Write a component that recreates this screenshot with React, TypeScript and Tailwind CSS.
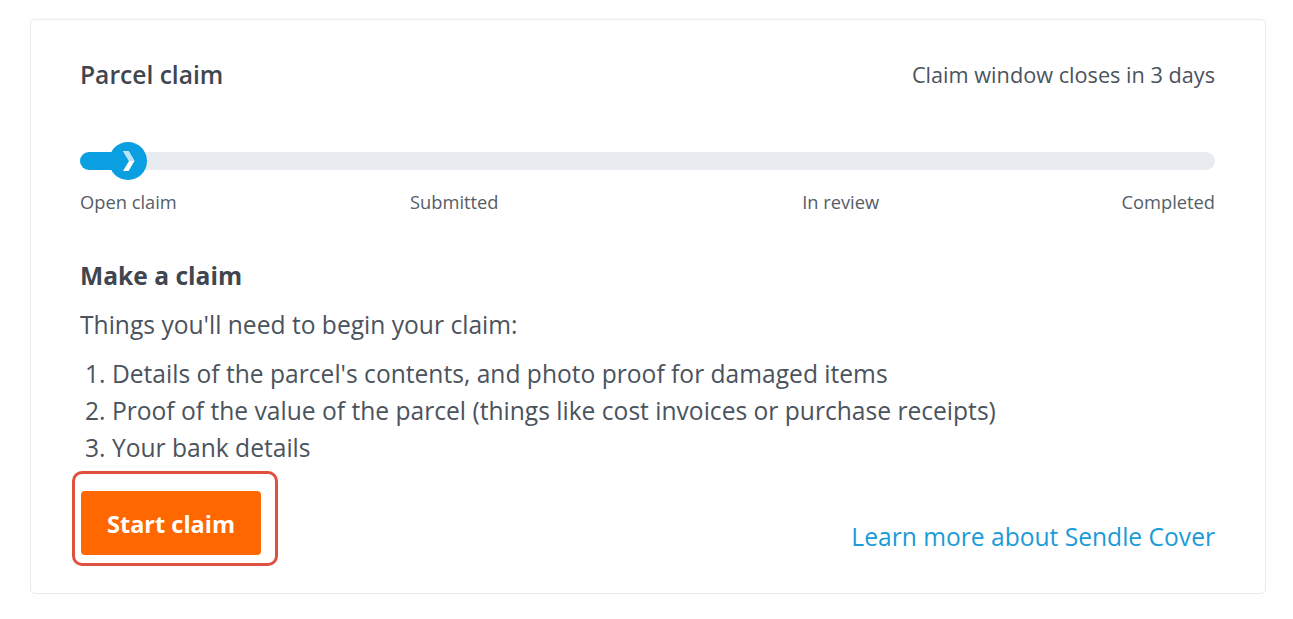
import React from 'react';

const steps = ['Open claim', 'Submitted', 'In review', 'Completed'];

const needs = [
    "Details of the parcel's contents, and photo proof for damaged items",
    'Proof of the value of the parcel (things like cost invoices or purchase receipts)',
    'Your bank details',
];

const App = () => {
    return (
        <div className="min-h-[619px] bg-white pt-[19px] px-[30px] font-['Open_Sans',sans-serif]">
            <div className="w-[1236px] rounded-[5px] border border-[#eaecef] bg-white pl-[49px] pr-[50px] pt-[41px] pb-[27px] shadow-[0_0_2px_rgba(0,0,0,0.04)]">
                <div className="flex items-center justify-between">
                    <h2 className="text-[24.6px] leading-[28px] font-semibold text-[#3f4650]">Parcel claim</h2>
                    <span className="text-[21.7px] leading-[28px] text-[#4b535d]">Claim window closes in 3 days</span>
                </div>

                <div className="mt-[53px] flex h-[38px] items-center">
                    <div className="relative h-[18px] w-full rounded-full bg-[#e8ebef]">
                        <div className="h-full w-[48px] rounded-l-full bg-[#0a9fe0]" />
                        <div className="absolute left-[29px] top-[-10px] flex h-[38px] w-[38px] items-center justify-center rounded-full bg-[#0a9fe0]">
                            <svg width="13" height="20" viewBox="0 0 13 20" className="ml-[1px]">
                                <path d="M1 0 H6.5 L12.5 10 L6.5 20 H1 L7 10 Z" fill="#ffffff" />
                                <path d="M1 0 H6.5 L12.5 10 H7 Z" fill="#b9e4f8" />
                            </svg>
                        </div>
                    </div>
                </div>

                <div className="mt-[10px] grid grid-cols-6 text-[18.3px] leading-[24px] text-[#555d66]">
                    <span className="col-span-1 text-left">{steps[0]}</span>
                    <span className="col-span-2 pr-[8px] text-center">{steps[1]}</span>
                    <span className="col-span-2 pl-[8px] text-center">{steps[2]}</span>
                    <span className="col-span-1 text-right">{steps[3]}</span>
                </div>

                <h3 className="mt-[48px] text-[24.6px] leading-[28px] font-bold text-[#3f4650]">Make a claim</h3>
                <p className="mt-[21px] text-[24.6px] leading-[28px] text-[#4b535d]">Things you'll need to begin your claim:</p>

                <ol className="mt-[16px] pl-[5px] text-[24.6px] leading-[37px] text-[#4b535d]">
                    {needs.map((item, index) => (
                        <li key={index}>
                            {index + 1}. {item}
                        </li>
                    ))}
                </ol>

                <div className="mt-[5px] flex items-end justify-between">
                    <div className="-ml-[8px] rounded-[10px] border-[3px] border-[#e0503f] pt-[17px] pr-[14px] pb-[8px] pl-[6px]">
                        <button className="h-[64px] w-[180px] rounded-[4px] bg-[#ff6700] pt-[3px] text-[23.5px] font-bold text-white">
                            Start claim
                        </button>
                    </div>
                    <a href="#" className="mb-[15px] text-[24.6px] leading-[28px] text-[#1b9bd7]">
                        Learn more about Sendle Cover
                    </a>
                </div>
            </div>
        </div>
    );
};

export default App;
